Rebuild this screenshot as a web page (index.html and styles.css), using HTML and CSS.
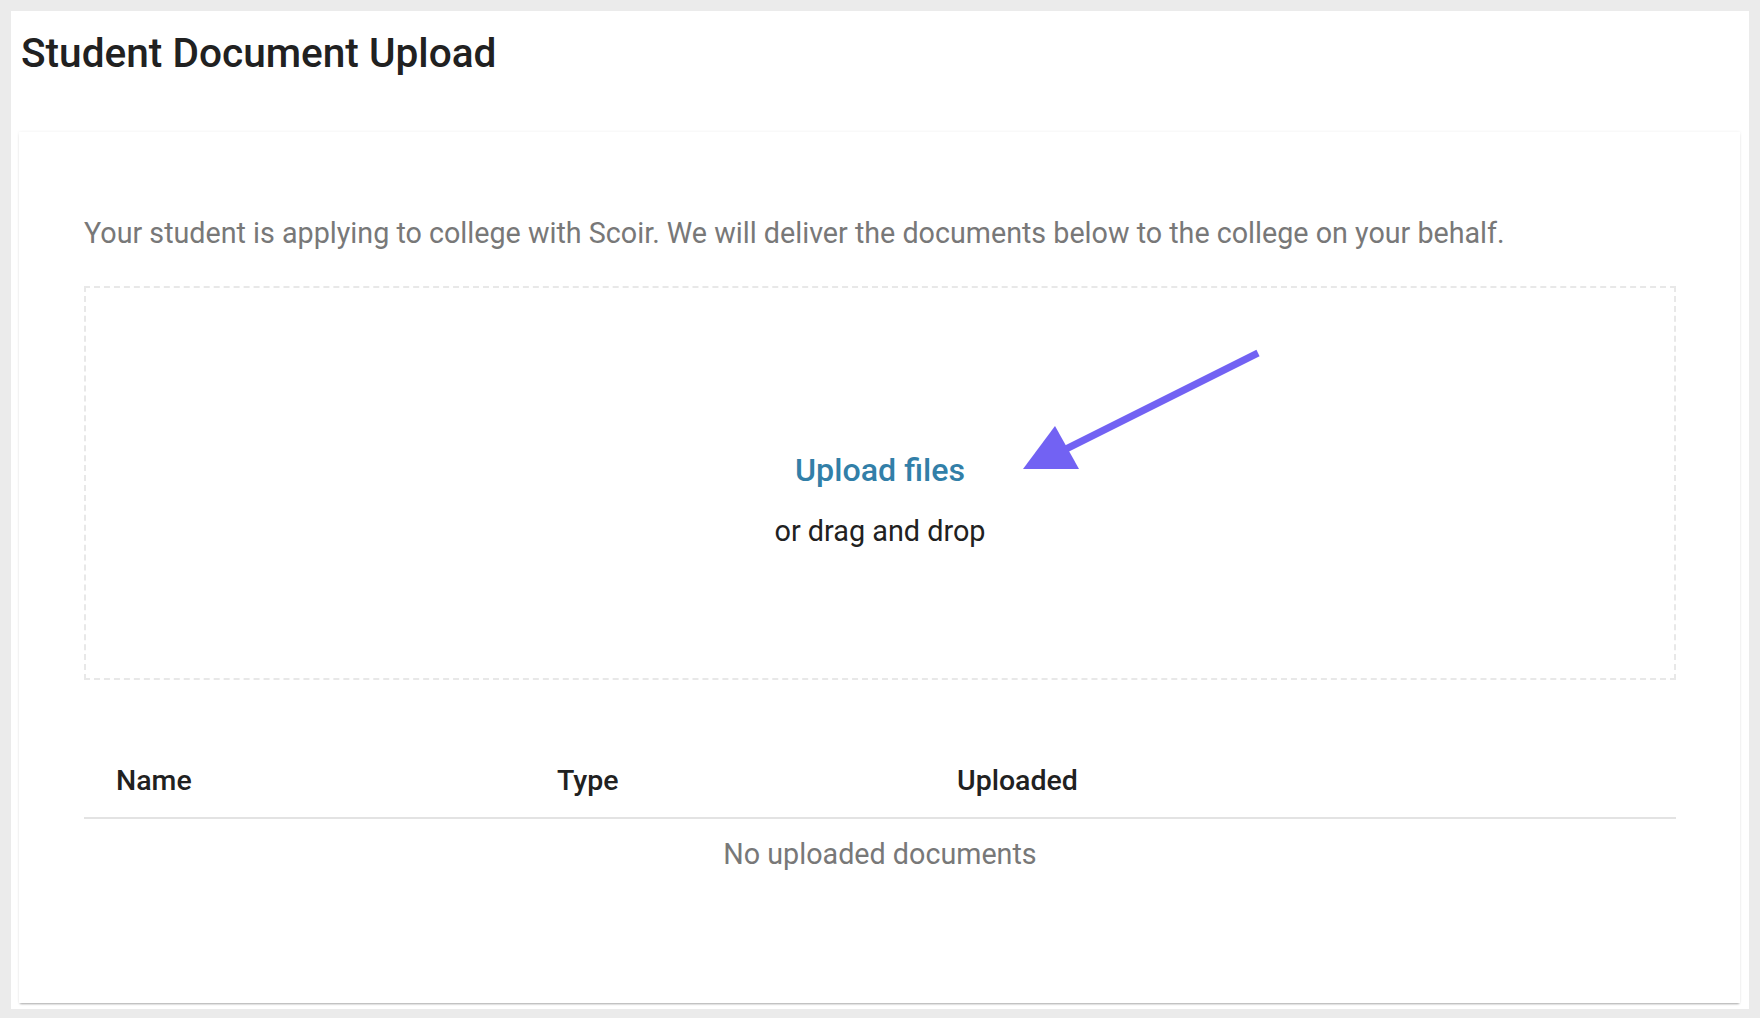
FILE: index.html
```html
<!DOCTYPE html>
<html lang="en">
<head>
    <meta charset="UTF-8">
    <meta name="viewport" content="width=device-width, initial-scale=1.0">
    <title>Student Document Upload</title>
    <link rel="stylesheet" href="styles.css">
</head>
<body>
    <div class="page">
        <h1 class="page-title">Student Document Upload</h1>
        <div class="card">
            <p class="intro">Your student is applying to college with Scoir. We will deliver the documents below to the college on your behalf.</p>
            <div class="dropzone">
                <a class="upload-link" href="#">Upload files</a>
                <div class="drop-hint">or drag and drop</div>
            </div>
            <div class="doc-table">
                <div class="doc-head">
                    <div class="cell">Name</div>
                    <div class="cell">Type</div>
                    <div class="cell">Uploaded</div>
                </div>
                <div class="doc-empty">No uploaded documents</div>
            </div>
        </div>
    </div>
    <svg class="annotation" width="1760" height="1018" viewBox="0 0 1760 1018">
        <line x1="1258" y1="353" x2="1056" y2="454" stroke="#7262f3" stroke-width="7"/>
        <polygon points="1023,469 1055,426 1079,469" fill="#7262f3"/>
    </svg>
</body>
</html>
```

FILE: styles.css
```css
* {
    box-sizing: border-box;
}
html, body {
    height: 100%;
}
body {
    margin: 0;
    padding: 11px 11px 9px 11px;
    background: #ebebeb;
    font-family: Roboto, "Liberation Sans", sans-serif;
    display: flex;
}
.page {
    flex: 1;
    background: #fff;
    display: flex;
    flex-direction: column;
    padding: 0 9px 6px 8px;
}
.page-title {
    margin: 18px 0 0 2px;
    font-size: 40.6px;
    line-height: 48px;
    font-weight: 500;
    color: #212121;
}
.card {
    flex: 1;
    margin-top: 55px;
    background: #fff;
    padding: 81px 64px 0 65px;
    box-shadow: 0 2px 2px -1px rgba(0, 0, 0, 0.32), 0 0 3px rgba(0, 0, 0, 0.07);
}
.intro {
    margin: 0 0 33px;
    font-size: 28.7px;
    line-height: 40px;
    color: #787878;
}
.dropzone {
    border: 2px dashed #e8e8e8;
    height: 394px;
    padding-top: 162px;
    text-align: center;
}
.upload-link {
    display: block;
    font-size: 32.2px;
    line-height: 40px;
    font-weight: 500;
    color: #327fa8;
    text-decoration: none;
}
.drop-hint {
    margin-top: 21px;
    font-size: 28.8px;
    line-height: 40px;
    color: #212121;
}
.doc-table {
    margin-top: 81px;
}
.doc-head {
    display: grid;
    grid-template-columns: 441px 400px 1fr;
    padding-bottom: 16px;
    border-bottom: 2px solid #e3e3e3;
}
.cell {
    padding-left: 32px;
    font-size: 28.5px;
    line-height: 40px;
    font-weight: 500;
    color: #212121;
}
.doc-empty {
    padding-top: 15px;
    text-align: center;
    font-size: 28.7px;
    line-height: 40px;
    color: #787878;
}
.annotation {
    position: absolute;
    top: 0;
    left: 0;
    pointer-events: none;
}
```
